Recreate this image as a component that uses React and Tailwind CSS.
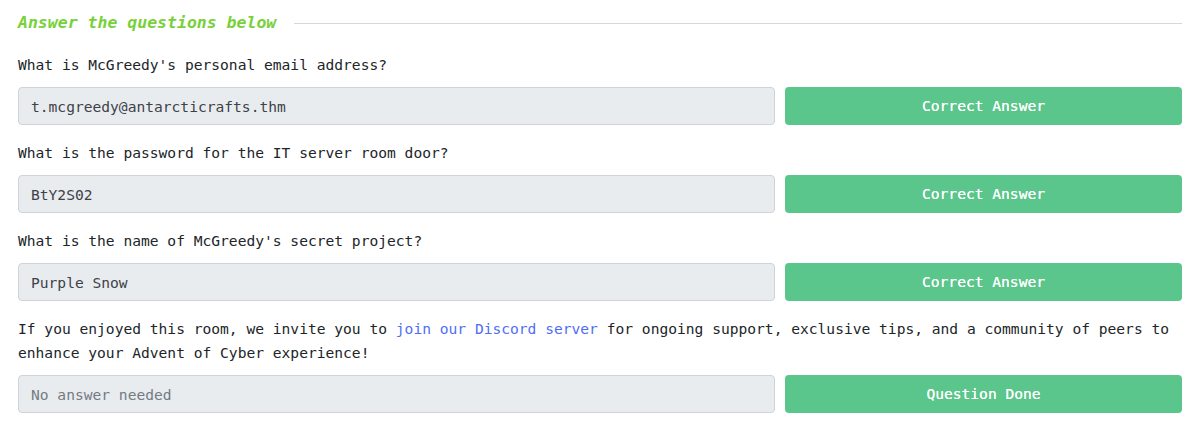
const QUESTIONS = [
  { q: "What is McGreedy's personal email address?", a: 't.mcgreedy@antarcticrafts.thm' },
  { q: 'What is the password for the IT server room door?', a: 'BtY2S02' },
  { q: "What is the name of McGreedy's secret project?", a: 'Purple Snow' },
];

function AnswerRow({ value, placeholder, label }) {
  return (
    <div className="flex gap-[10px] mt-[10px]">
      <input
        readOnly
        value={value}
        placeholder={placeholder}
        className="w-[757px] h-[38px] px-3 bg-[#e9ecef] border border-[#ced4da] rounded-[4px] text-[#3d4248] placeholder:text-[#737b83] outline-none font-[inherit] text-[14.6px]"
      />
      <button className="flex-1 h-[38px] rounded-[4px] bg-[#5ac68b] text-white font-normal text-[14.6px] [text-shadow:0_0_0.4px_#fff]">
        {label}
      </button>
    </div>
  );
}

export default function App() {
  return (
    <div
      className="bg-white min-h-screen px-[18px] pr-[15px] pt-[9px] text-[#212529] text-[14.6px] leading-[24px]"
      style={{ fontFamily: '"DejaVu Sans Mono", monospace' }}
    >
      <div className="flex items-center gap-[18px] h-[28px]">
        <h2 className="italic font-bold text-[16.5px] text-[#78d13a] whitespace-nowrap">
          Answer the questions below
        </h2>
        <div className="flex-1 h-px bg-[#d5d8dc]" />
      </div>

      {QUESTIONS.map((item, i) => (
        <div key={i} className="mt-[16px]">
          <p>{item.q}</p>
          <AnswerRow value={item.a} label="Correct Answer" />
        </div>
      ))}

      <div className="mt-[16px]">
        <p>
          If you enjoyed this room, we invite you to{' '}
          <a className="text-[#4f6ef7]">join our Discord server</a> for ongoing support, exclusive tips, and a
          community of peers to enhance your Advent of Cyber experience!
        </p>
        <AnswerRow value="" placeholder="No answer needed" label="Question Done" />
      </div>
    </div>
  );
}
